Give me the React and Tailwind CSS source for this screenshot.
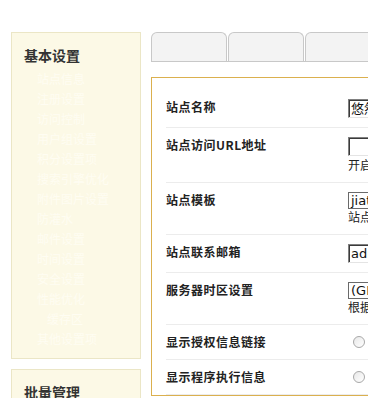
import React from "react";

const menu = [
  "站点信息",
  "注册设置",
  "访问控制",
  "用户组设置",
  "积分设置项",
  "搜索引擎优化",
  "附件图片设置",
  "防灌水",
  "邮件设置",
  "时间设置",
  "安全设置",
  "性能优化",
  "缓存区",
  "其他设置项",
];

const font = { fontFamily: '"Noto Sans CJK SC", sans-serif' };

function TextInput({ value }) {
  return (
    <div className="h-[19px] w-[220px] border border-[#808080] border-b-[#e4e4e4] border-r-[#e4e4e4] shadow-[inset_1px_1px_0_#3a3a3a] bg-white pl-[2px] text-[13px] leading-[17px] text-[#111] whitespace-nowrap overflow-hidden" style={{ fontFamily: '"DejaVu Sans", "Noto Sans CJK SC", sans-serif' }}>
      {value}
    </div>
  );
}

function Select({ value }) {
  return (
    <div className="h-[17px] w-[220px] border border-[#6a6a6a] bg-white pl-[2px] text-[13px] leading-[15px] text-[#111] whitespace-nowrap overflow-hidden" style={{ fontFamily: '"DejaVu Sans", "Noto Sans CJK SC", sans-serif' }}>
      {value}
    </div>
  );
}

function Helper({ children, mt }) {
  return <div className={`text-[12px] leading-[16px] text-[#222] whitespace-nowrap ${mt ? "mt-[1px]" : ""}`}>{children}</div>;
}

function Radio() {
  return (
    <div className="h-[16px] flex items-center">
      <span className="ml-[5px] w-[12px] h-[12px] rounded-full border border-[#a8a8a8] bg-gradient-to-br from-[#e8e8e8] to-white" />
    </div>
  );
}

function Row({ label, children }) {
  return (
    <div className="flex items-start py-[9px] border-b border-[#ececec]">
      <div className="w-[182px] shrink-0 text-[12px] leading-[16px] font-bold text-[#222] tracking-[0.5px] whitespace-nowrap">{label}</div>
      <div className="flex flex-col">{children}</div>
    </div>
  );
}

export default function App() {
  return (
    <div className="w-[368px] h-[398px] overflow-hidden bg-white" style={font}>
      <div className="flex pt-[32px] pl-[11px]">
        <div className="w-[130px] shrink-0 flex flex-col gap-[10px]">
          <div className="border border-[#ebe6c6] bg-[#fcf9e6] pt-[12px] pb-[9px]">
            <div className="pl-[12px] text-[14px] leading-[20px] font-bold text-[#333]">基本设置</div>
            <div className="mt-[4px] flex flex-col">
              {menu.map((m, i) => (
                <div key={i} className={`h-[20px] leading-[20px] text-[12px] text-[#fffdf2] whitespace-nowrap ${i === 12 ? "pl-[35px]" : "pl-[25px]"}`}>
                  {m}
                </div>
              ))}
            </div>
          </div>
          <div className="border border-[#ebe6c6] bg-[#fcf9e6] pt-[12px] pb-[9px]">
            <div className="pl-[12px] text-[14px] leading-[20px] font-bold text-[#333]">批量管理</div>
          </div>
        </div>
        <div className="ml-[10px] flex-1 min-w-[300px]">
          <div className="flex gap-[1px] border-b border-[#c8c8c8]">
            <div className="w-[76px] h-[29px] shrink-0 rounded-t-[6px] border border-b-0 border-[#c8c8c8] bg-[#f3f3f3]" />
            <div className="w-[76px] h-[29px] shrink-0 rounded-t-[6px] border border-b-0 border-[#c8c8c8] bg-[#f3f3f3]" />
            <div className="w-[76px] h-[29px] shrink-0 rounded-t-[6px] border border-b-0 border-[#c8c8c8] bg-[#f3f3f3]" />
          </div>
          <div className="mt-[15px] border border-[#dbb04e] pt-[12px] pl-[14px] w-[400px]">
            <Row label="站点名称">
              <TextInput value="悠然网络" />
            </Row>
            <Row label="站点访问URL地址">
              <TextInput value="" />
              <Helper mt>开启伪静态</Helper>
            </Row>
            <Row label="站点模板">
              <Select value="jiathis" />
              <Helper>站点模板</Helper>
            </Row>
            <Row label="站点联系邮箱">
              <TextInput value="admin@admin.com" />
            </Row>
            <Row label="服务器时区设置">
              <Select value="(GMT +8:00)" />
              <Helper>根据服务器</Helper>
            </Row>
            <Row label="显示授权信息链接">
              <Radio />
            </Row>
            <Row label="显示程序执行信息">
              <Radio />
            </Row>
          </div>
        </div>
      </div>
    </div>
  );
}
